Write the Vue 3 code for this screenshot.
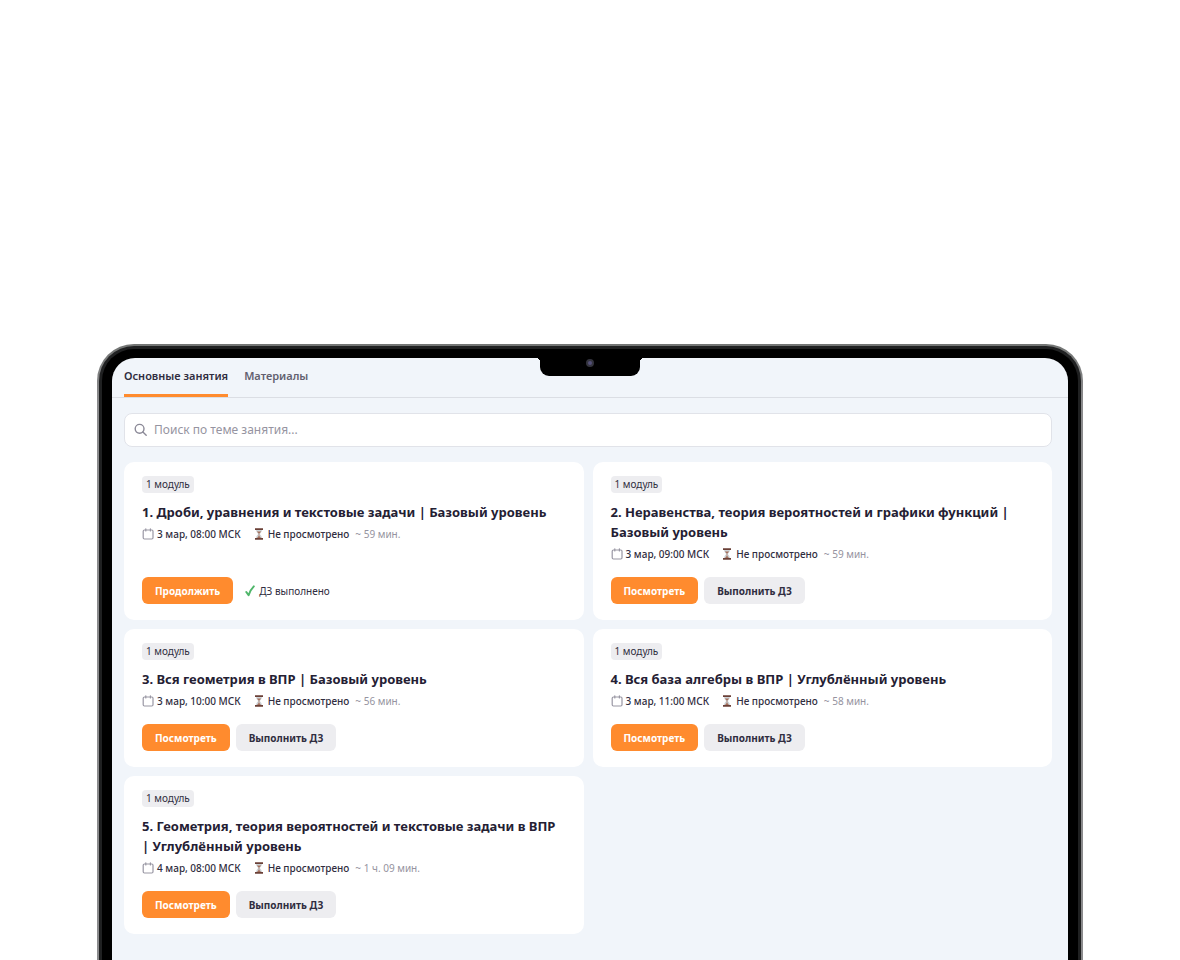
<template>
  <main class="page">
    <div class="laptop">
      <div class="bezel">
        <div class="screen">
          <nav class="tabs">
            <a
              v-for="tab in tabs"
              :key="tab"
              href="#"
              :class="['tab', { active: tab === activeTab }]"
              @click.prevent="activeTab = tab"
            >{{ tab }}</a>
          </nav>

          <div class="content">
            <label class="search">
              <svg class="search-icon" viewBox="0 0 14 14" fill="none" stroke="currentColor" stroke-width="1.4" stroke-linecap="round">
                <circle cx="5.6" cy="5.8" r="4.4" />
                <path d="M8.9 9.1L12.2 12.2" />
              </svg>
              <input v-model="search" type="text" class="search-input" placeholder="Поиск по теме занятия..." aria-label="Поиск по теме занятия" />
            </label>

            <div class="lessons">
              <article v-for="lesson in filtered" :key="lesson.id" class="card">
                <span class="badge">1 модуль</span>
                <h2 class="title">{{ lesson.title }}</h2>
                <div class="meta">
                  <svg class="calendar" viewBox="0 0 12 12" fill="none" stroke="currentColor" stroke-width="1.2" stroke-linecap="round">
                    <rect x="1.2" y="2" width="9.8" height="9" rx="1.2" />
                    <path d="M3.8 0.8V3M8.4 0.8V3" />
                  </svg>
                  <span class="date">{{ lesson.date }} МСК</span>
                  <svg class="hourglass" viewBox="0 0 10 12">
                    <path d="M2 1.5H8C8 4 6.6 5 5.7 6C6.6 7 8 8 8 10.5H2C2 8 3.4 7 4.3 6C3.4 5 2 4 2 1.5Z" fill="#cdd3d7" />
                    <path d="M2.8 3.4H7.2L5.3 5.4V8L7.4 10.5H2.6L4.7 8V5.4Z" fill="#a5705c" />
                    <path d="M1 0.3H9V2H1ZM1 10H9V11.7H1Z" fill="#6b4037" />
                  </svg>
                  <span>Не просмотрено</span>
                  <span class="duration">~ {{ lesson.duration }}</span>
                </div>
                <div class="actions">
                  <button type="button" class="btn btn-primary">{{ lesson.done ? 'Продолжить' : 'Посмотреть' }}</button>
                  <span v-if="lesson.done" class="done">
                    <svg class="check" viewBox="0 0 10 12" fill="none" stroke="#4fb66a" stroke-width="2" stroke-linecap="round" stroke-linejoin="round">
                      <path d="M1.3 7L3.6 10.2C4.8 6.5 6.4 3.8 8.8 1.4" />
                    </svg>
                    ДЗ выполнено
                  </span>
                  <button v-else type="button" class="btn btn-secondary">Выполнить ДЗ</button>
                </div>
              </article>
            </div>
          </div>
        </div>

        <div class="notch">
          <span class="camera"></span>
        </div>
      </div>
    </div>
  </main>
</template>

<script setup>
import { ref, computed } from 'vue';

const tabs = ['Основные занятия', 'Материалы'];
const activeTab = ref(tabs[0]);
const search = ref('');

const lessons = [
  { id: 1, title: '1. Дроби, уравнения и текстовые задачи | Базовый уровень', date: '3 мар, 08:00', duration: '59 мин.', done: true },
  { id: 2, title: '2. Неравенства, теория вероятностей и графики функций | Базовый уровень', date: '3 мар, 09:00', duration: '59 мин.', done: false },
  { id: 3, title: '3. Вся геометрия в ВПР | Базовый уровень', date: '3 мар, 10:00', duration: '56 мин.', done: false },
  { id: 4, title: '4. Вся база алгебры в ВПР | Углублённый уровень', date: '3 мар, 11:00', duration: '58 мин.', done: false },
  { id: 5, title: '5. Геометрия, теория вероятностей и текстовые задачи в ВПР | Углублённый уровень', date: '4 мар, 08:00', duration: '1 ч. 09 мин.', done: false }
];

const filtered = computed(() =>
  lessons.filter((lesson) => lesson.title.toLowerCase().includes(search.value.trim().toLowerCase()))
);
</script>

<style>
body {
  background: #fff;
}
</style>

<style scoped>
.page {
  box-sizing: border-box;
  display: flex;
  min-height: 100vh;
  padding: 344px 97px 0;
  font-family: "Noto Sans", "Open Sans", sans-serif;
  color: #302d40;
}

/* Корпус ноутбука */
.laptop {
  flex: 1;
  min-width: 0;
  display: flex;
  padding: 2px 2px 0;
  border-radius: 37px 37px 0 0;
  background: linear-gradient(#737574, #8b8b8d 60px);
}

.bezel {
  position: relative;
  flex: 1;
  min-width: 0;
  display: flex;
  box-sizing: border-box;
  padding: 9px 10px 0;
  border: 3px solid #202122;
  border-bottom: 0;
  border-radius: 35px 35px 0 0;
  background: #000;
}

.screen {
  flex: 1;
  min-width: 0;
  border-radius: 23px 23px 0 0;
  background: #f1f5fa;
  overflow: hidden;
}

.notch {
  position: absolute;
  top: 0;
  left: 50%;
  width: 100px;
  height: 27px;
  transform: translateX(-50%);
  border-radius: 0 0 9px 9px;
  background: #000;
}

.notch::before,
.notch::after {
  content: "";
  position: absolute;
  top: 9px;
  width: 4px;
  height: 4px;
}

.notch::before {
  right: 100%;
  background: radial-gradient(circle at 0 100%, transparent 4px, #000 4px);
}

.notch::after {
  left: 100%;
  background: radial-gradient(circle at 100% 100%, transparent 4px, #000 4px);
}

.camera {
  position: absolute;
  top: 10px;
  left: 46px;
  width: 4px;
  height: 4px;
  border: 2px solid #34343e;
  border-radius: 50%;
  background: #535078;
}

/* Вкладки */
.tabs {
  display: flex;
  gap: 16px;
  height: 39px;
  padding-left: 12px;
  border-bottom: 1px solid #dbdee4;
}

.tab {
  box-sizing: border-box;
  height: 39px;
  padding-top: 10px;
  border-bottom: 3px solid transparent;
  font-size: 11px;
  font-weight: 600;
  line-height: 16px;
  color: #62606f;
  text-decoration: none;
  white-space: nowrap;
}

.tab.active {
  border-color: #ff8b2e;
  color: #302d40;
}

.content {
  padding: 15px 16px 27px 12px;
}

.search {
  box-sizing: border-box;
  display: flex;
  align-items: center;
  gap: 6px;
  height: 34px;
  padding: 0 9px;
  border: 1px solid #e1e3e9;
  border-radius: 8px;
  background: #fff;
}

.search-icon {
  flex: none;
  width: 14px;
  height: 14px;
  color: #8b8997;
}

.search-input {
  flex: 1;
  min-width: 0;
  padding: 0;
  border: 0;
  outline: 0;
  background: transparent;
  font-family: inherit;
  font-size: 12px;
  line-height: 16px;
  color: #302d40;
}

.search-input::placeholder {
  color: #9694a1;
  opacity: 1;
}

/* Карточки занятий */
.lessons {
  display: grid;
  grid-template-columns: repeat(2, minmax(0, 1fr));
  gap: 9px;
  margin-top: 15px;
}

.card {
  display: flex;
  flex-direction: column;
  align-items: flex-start;
  padding: 14px 18px 16px;
  border-radius: 10px;
  background: #fff;
}

.badge {
  padding: 0 4px;
  border-radius: 4px;
  background: #ededf0;
  font-size: 10px;
  line-height: 17px;
}

.title {
  margin: 9px 0 4px;
  font-size: 13px;
  font-weight: 700;
  line-height: 20px;
  color: #242033;
}

.meta {
  display: flex;
  align-items: center;
  height: 16px;
  margin-bottom: 15px;
  font-size: 10px;
  font-weight: 500;
  line-height: 16px;
  white-space: nowrap;
}

.calendar {
  width: 12px;
  height: 12px;
  margin-right: 3px;
  color: #9997a4;
}

.date {
  margin-right: 13px;
}

.hourglass {
  width: 10px;
  height: 12px;
  margin-right: 4px;
}

.duration {
  margin-left: 6px;
  font-weight: 400;
  color: #9593a0;
}

.actions {
  display: flex;
  align-items: center;
  gap: 6px;
  margin-top: auto;
}

.btn {
  height: 27px;
  padding: 0 13px;
  border: 0;
  border-radius: 6px;
  font-family: inherit;
  font-size: 10px;
  font-weight: 700;
  line-height: 16px;
  white-space: nowrap;
  cursor: pointer;
}

.btn-primary {
  background: #ff8b2e;
  color: #fff;
}

.btn-secondary {
  background: #ededf0;
  color: #302d40;
}

.done {
  display: flex;
  align-items: center;
  gap: 4px;
  margin-left: 6px;
  font-size: 10px;
  line-height: 16px;
}

.check {
  width: 10px;
  height: 12px;
}
</style>
